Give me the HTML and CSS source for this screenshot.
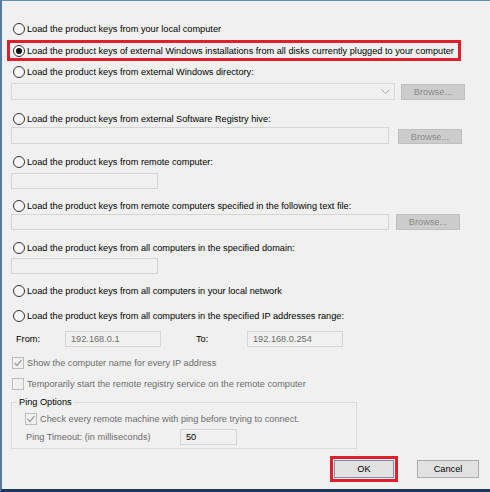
FILE: index.html
```html
<!DOCTYPE html>
<html lang="en">
<head>
  <meta charset="UTF-8">
  <title>Load product keys</title>
  <link rel="stylesheet" href="styles.css">
</head>
<body>

  <div class="dialog">
    <label class="opt"><span class="radio"></span>Load the product keys from your local computer</label>

    <div class="mark">
      <label class="opt"><span class="radio on"></span>Load the product keys of external Windows installations from all disks currently plugged to your computer</label>
    </div>

    <label class="opt sp3"><span class="radio"></span>Load the product keys from external Windows directory:</label>
    <div class="row sp3">
      <div class="combo">
        <svg width="9" height="6" viewBox="0 0 9 6"><path d="M0.5 0.5 L4.5 4.5 L8.5 0.5" fill="none" stroke="#a8a8a8" stroke-width="1"/></svg>
      </div>
      <button class="browse" disabled>Browse...</button>
    </div>

    <label class="opt sp11"><span class="radio"></span>Load the product keys from external Software Registry hive:</label>
    <div class="row bottom">
      <input class="text" type="text" disabled>
      <button class="browse wide-gap" disabled>Browse...</button>
    </div>

    <label class="opt sp10"><span class="radio"></span>Load the product keys from remote computer:</label>
    <input class="text short sp3" type="text" disabled>

    <label class="opt sp9"><span class="radio"></span>Load the product keys from remote computers specified in the following text file:</label>
    <div class="row">
      <input class="text thin" type="text" disabled>
      <button class="browse mid-gap" disabled>Browse...</button>
    </div>

    <label class="opt sp10"><span class="radio"></span>Load the product keys from all computers in the specified domain:</label>
    <input class="text short sp2" type="text" disabled>

    <label class="opt sp9"><span class="radio"></span>Load the product keys from all computers in your local network</label>

    <label class="opt sp9"><span class="radio"></span>Load the product keys from all computers in the specified IP addresses range:</label>

    <div class="range sp7">
      <span class="from">From:</span>
      <input class="ip" type="text" value="192.168.0.1" disabled>
      <span class="to">To:</span>
      <input class="ip" type="text" value="192.168.0.254" disabled>
    </div>

    <div class="check off sp8">
      <span class="box"><svg width="10" height="10" viewBox="0 0 10 10"><path d="M1.5 5 L4 7.5 L8.5 2" fill="none" stroke="#a0a0a0" stroke-width="1.2"/></svg></span>
      Show the computer name for every IP address
    </div>
    <div class="check off sp5">
      <span class="box"></span>
      Temporarily start the remote registry service on the remote computer
    </div>

    <fieldset class="ping">
      <legend>Ping Options</legend>
      <div class="check off">
        <span class="box"><svg width="10" height="10" viewBox="0 0 10 10"><path d="M1.5 5 L4 7.5 L8.5 2" fill="none" stroke="#a0a0a0" stroke-width="1.2"/></svg></span>
        Check every remote machine with ping before trying to connect.
      </div>
      <div class="timeout">
        <span class="timeout-label">Ping Timeout: (in milliseconds)</span>
        <input class="ms" type="text" value="50" disabled>
      </div>
    </fieldset>

    <div class="actions">
      <div class="ok-mark"><button class="btn">OK</button></div>
      <button class="btn">Cancel</button>
    </div>
  </div>

</body>
</html>
```

FILE: styles.css
```css
body {
  margin: 0;
  padding: 0;
  background: #f0f0f0;
}

.dialog {
  width: 490px;
  height: 492px;
  box-sizing: border-box;
  background: #f0f0f0;
  border-left: 2px solid #56799c;
  border-top: 1px solid #6a8db0;
  border-bottom: 3px solid #1f3856;
  padding: 20px 0 0 9px;
  font-family: "Liberation Sans", Arial, sans-serif;
  font-size: 9.2px;
  color: #000;
}

.opt {
  display: flex;
  align-items: center;
  gap: 2px;
  height: 16px;
  margin-left: 2px;
  white-space: nowrap;
}

.radio {
  width: 12px;
  height: 12px;
  box-sizing: border-box;
  border: 1px solid #333;
  border-radius: 50%;
  background: #f7f7f7;
  flex: none;
  position: relative;
}

.radio.on::after {
  content: "";
  position: absolute;
  left: 2px;
  top: 2px;
  width: 6px;
  height: 6px;
  border-radius: 50%;
  background: #111;
}

.mark {
  display: flex;
  align-items: center;
  width: 448px;
  height: 15px;
  margin: 3px 0 0 -4px;
  border: 3px solid #e11f2c;
}

.mark .opt {
  margin-left: 3px;
}

.row {
  display: flex;
  align-items: center;
}

.row.bottom {
  align-items: flex-end;
}

.combo {
  width: 384px;
  height: 17px;
  box-sizing: border-box;
  border: 1px solid #d9d9d9;
  background: #f0f0f0;
  display: flex;
  align-items: center;
  justify-content: flex-end;
  padding-right: 4px;
}

.browse {
  width: 64px;
  height: 16px;
  margin-left: 6px;
  padding: 0;
  box-sizing: border-box;
  background: #cccccc;
  border: 1px solid #bfbfbf;
  color: #8a8a8a;
  font: inherit;
}

.browse.wide-gap { margin-left: 9px; height: 15px; }
.browse.mid-gap { margin-left: 7px; }

.text {
  display: block;
  width: 378px;
  height: 17px;
  box-sizing: border-box;
  border: 1px solid #d5d5d5;
  background: #f0f0f0;
  margin: 0;
  padding: 0 5px;
  font: inherit;
}

.text.thin { height: 16px; }
.text.short { width: 147px; height: 16px; }

.range {
  display: flex;
  align-items: center;
  height: 16px;
}

.from {
  width: 49px;
  margin-left: 5px;
}

.to {
  width: 51px;
  margin-left: 35px;
}

.ip, .ms {
  width: 96px;
  height: 16px;
  box-sizing: border-box;
  border: 1px solid #d5d5d5;
  background: #f0f0f0;
  margin: 0;
  padding: 0 5px;
  font: inherit;
  color: #6d6d6d;
}

.check {
  display: flex;
  align-items: center;
  gap: 3px;
  height: 16px;
  margin-left: 1px;
  white-space: nowrap;
}

.check.off {
  color: #6d6d6d;
}

.box {
  width: 12px;
  height: 12px;
  box-sizing: border-box;
  border: 1px solid #bcbcbc;
  background: #f0f0f0;
  display: flex;
  align-items: center;
  justify-content: center;
  flex: none;
}

.ping {
  width: 346px;
  box-sizing: border-box;
  margin: 4px 0 0 0;
  padding: 3px 0 3px 13px;
  border: 1px solid #dcdcdc;
  min-width: 0;
}

.ping legend {
  margin-left: -8px;
  padding: 0 2px;
  color: #000;
  line-height: 12px;
}

.ping .check {
  margin-left: 0;
}

.timeout {
  display: flex;
  align-items: center;
  height: 16px;
  margin-top: 2px;
  color: #6d6d6d;
}

.timeout-label {
  width: 154px;
  margin-left: 1px;
}

.ms {
  width: 57px;
  color: #000;
}

.actions {
  display: flex;
  justify-content: flex-end;
  align-items: center;
  gap: 19px;
  height: 26px;
  margin-top: 7px;
  padding-right: 11px;
}

.ok-mark {
  border: 3px solid #e11f2c;
  padding: 1px;
  display: flex;
}

.btn {
  width: 62px;
  height: 18px;
  padding: 0;
  box-sizing: border-box;
  background: #e1e1e1;
  border: 1px solid #adadad;
  font: inherit;
  color: #000;
}

.ok-mark .btn {
  width: 60px;
  border-color: #7a8fa8;
}

/* vertical spacing between rows */
.sp2 { margin-top: 2px; }
.sp3 { margin-top: 3px; }
.sp5 { margin-top: 5px; }
.sp7 { margin-top: 7px; }
.sp8 { margin-top: 8px; }
.sp9 { margin-top: 9px; }
.sp10 { margin-top: 10px; }
.sp11 { margin-top: 11px; }
```
